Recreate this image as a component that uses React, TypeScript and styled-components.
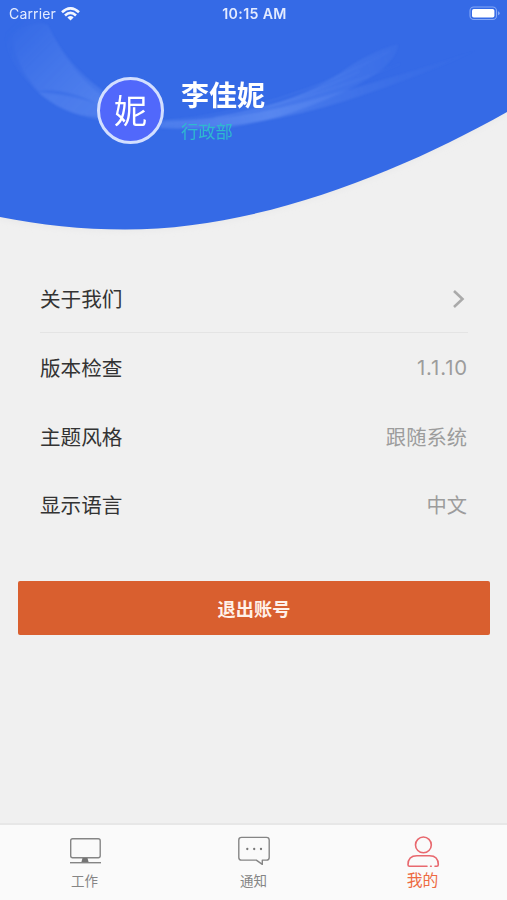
import React from "react";
import styled, { createGlobalStyle } from "styled-components";

const GlobalStyle = createGlobalStyle`
  * { box-sizing: border-box; }
  body {
    margin: 0;
    background: #f0f0f0;
    font-family: Inter, "Noto Sans CJK SC", sans-serif;
  }
`;

const Screen = styled.div`
  display: flex;
  flex-direction: column;
  width: 507px;
  height: 900px;
  background: #f0f0f0;
  overflow: hidden;
`;

const Header = styled.header`
  position: relative;
  height: 264px;
  flex: none;
  color: #fff;
`;

const Backdrop = styled.svg`
  position: absolute;
  inset: 0;
`;

const StatusBar = styled.div`
  position: relative;
  display: grid;
  grid-template-columns: 1fr auto 1fr;
  align-items: center;
  height: 27px;
  padding: 0 7px 0 9px;
  font-size: 14px;
  line-height: 20px;
  color: #e3ebff;
`;

const Carrier = styled.div`
  display: flex;
  align-items: center;
  gap: 5px;
  letter-spacing: 0.15px;
`;

const Clock = styled.div`
  font-weight: 600;
  font-size: 14.2px;
  letter-spacing: 0.35px;
`;

const BatterySlot = styled.div`
  display: flex;
  justify-content: flex-end;
`;

const Profile = styled.div`
  position: relative;
  display: flex;
  align-items: flex-start;
  gap: 17px;
  padding: 50px 0 0 97px;
`;

const Avatar = styled.div`
  display: flex;
  align-items: center;
  justify-content: center;
  width: 67px;
  height: 67px;
  border: 3px solid #d3dfff;
  border-radius: 50%;
  background: #5168fb;
  font-size: 33px;
  line-height: 48px;
  font-weight: 400;
`;

const Identity = styled.div`
  display: flex;
  flex-direction: column;
  padding-top: 1px;
`;

const Name = styled.div`
  font-size: 28px;
  line-height: 36px;
  font-weight: 600;
`;

const Department = styled.div`
  margin-top: 6px;
  font-size: 17.3px;
  line-height: 24px;
  color: #2fb9cf;
`;

const Settings = styled.main`
  display: flex;
  flex-direction: column;
  padding: 0 39px 0 40px;
`;

const SettingRow = styled.div<{ $divided?: boolean }>`
  display: flex;
  align-items: center;
  justify-content: space-between;
  height: ${(p) => (p.$divided ? 69 : 68.7)}px;
  padding-top: 2px;
  border-bottom: ${(p) => (p.$divided ? "1px solid #e4e4e4" : "none")};
`;

const SettingLabel = styled.span`
  padding-top: 1px;
  font-size: 20.6px;
  line-height: 30px;
  color: #333;
`;

const SettingValue = styled.span<{ $numeric?: boolean }>`
  padding-top: ${(p) => (p.$numeric ? 0 : 1)}px;
  margin-right: ${(p) => (p.$numeric ? 0 : 1)}px;
  font-size: 20.3px;
  line-height: 30px;
  letter-spacing: ${(p) => (p.$numeric ? "0.9px" : "0")};
  color: #9c9c9c;
`;

const LogoutButton = styled.button`
  flex: none;
  height: 54px;
  margin: 42px 17px 0 18px;
  padding: 0;
  border: 0;
  border-radius: 2px;
  background: #d95f2f;
  color: #fff1e9;
  font-family: inherit;
  font-size: 18.2px;
  font-weight: 600;
`;

const TabBar = styled.nav`
  display: grid;
  grid-template-columns: repeat(3, 1fr);
  height: 77px;
  flex: none;
  margin-top: auto;
  border-top: 2px solid #e7e7e7;
  background: #fafafa;
`;

const Tab = styled.div<{ $active?: boolean }>`
  display: flex;
  flex-direction: column;
  align-items: center;
  padding-top: 11px;
  color: ${(p) => (p.$active ? "#ed6b42" : "#858585")};
  font-size: ${(p) => (p.$active ? 15.8 : 13.5)}px;
`;

const TabLabel = styled.span<{ $active?: boolean }>`
  line-height: 22px;
`;

const HeaderBackdrop = () => (
  <Backdrop width="507" height="264" viewBox="0 0 507 264" aria-hidden>
    <defs>
      <linearGradient id="leftVeil" x1="10" y1="25" x2="100" y2="115" gradientUnits="userSpaceOnUse">
        <stop offset="0" stopColor="#8fb4ff" stopOpacity="0" />
        <stop offset="1" stopColor="#8fb4ff" stopOpacity="0.24" />
      </linearGradient>
      <linearGradient id="rightVeil" x1="150" y1="130" x2="485" y2="50" gradientUnits="userSpaceOnUse">
        <stop offset="0" stopColor="#8fb4ff" stopOpacity="0.12" />
        <stop offset="0.35" stopColor="#8fb4ff" stopOpacity="0.22" />
        <stop offset="0.75" stopColor="#8fb4ff" stopOpacity="0.06" />
        <stop offset="1" stopColor="#8fb4ff" stopOpacity="0" />
      </linearGradient>
      <filter id="soften" x="-10%" y="-10%" width="120%" height="120%">
        <feGaussianBlur stdDeviation="0.9" />
      </filter>
      <filter id="shade" x="-10%" y="-10%" width="120%" height="130%">
        <feGaussianBlur stdDeviation="3" />
      </filter>
    </defs>
    <path d="M0 0H507V113C400 173 260 231 125 231C82 231 40 227 0 219Z" fill="#e8e8e9" filter="url(#shade)" />
    <path d="M0 0H507V112C400 172 260 229.500 125 229.500C82 229.500 40 225 0 217Z" fill="#356ae6" />
    <g filter="url(#soften)">
      <path d="M5 20Q0 52 28 82Q52 112 100 120V94Q70 72 48 25Q25 10 5 20Z" fill="url(#leftVeil)" opacity="0.6" />
      <path d="M48 25Q66 64 102 90V106Q65 87 38 91Q15 65 12 35Q28 20 48 25Z" fill="url(#leftVeil)" opacity="0.9" />
      <path d="M38 92Q72 94 104 106V116Q70 120 38 92Z" fill="#8fb4ff" opacity="0.17" />
      <path d="M160 120Q210 121 253 110Q310 96 350 66Q375 50 398 44Q398 66 345 91Q275 124 215 129Q185 130 160 128Z" fill="url(#rightVeil)" />
      <path d="M160 122Q240 121 318 98Q405 75 485 47Q420 77 345 101Q250 131 160 128Z" fill="url(#rightVeil)" />
      <g fill="none" stroke="url(#rightVeil)" strokeWidth="1">
        <path d="M165 121Q280 111 390 51" />
        <path d="M165 124Q285 111 400 64" />
        <path d="M215 118Q300 101 360 71" />
      </g>
    </g>
  </Backdrop>
);

const WifiIcon = () => (
  <svg width="19" height="14" viewBox="0 0 19 14" aria-hidden>
    <g fill="none" stroke="#f2f6ff" strokeWidth="2.600">
      <path d="M1 5.200Q9.500 -2.500 18 5.200" />
      <path d="M4 8.500Q9.500 3.300 15 8.500" />
    </g>
    <path d="M6.400 10.400Q9.500 7.700 12.600 10.400L9.500 13.500Z" fill="#f2f6ff" />
  </svg>
);

const BatteryIcon = () => (
  <svg width="31" height="15" viewBox="0 0 31 15" aria-hidden>
    <rect x="1" y="1" width="26.500" height="12.500" rx="3.800" fill="none" stroke="#86a8f6" strokeWidth="1.100" />
    <rect x="3" y="2.900" width="22.400" height="8.700" rx="1.800" fill="#fff" />
    <path d="M29 5.300Q30.700 6 30.700 7.300T29 9.300Z" fill="#86a8f6" />
  </svg>
);

const ChevronIcon = () => (
  <svg width="16" height="20" viewBox="0 0 16 20" aria-hidden>
    <path d="M2 2L10.500 10L2 18" fill="none" stroke="#aaa" strokeWidth="2.600" />
  </svg>
);

const MonitorIcon = () => (
  <svg width="34" height="34" viewBox="0 0 34 34" aria-hidden>
    <rect x="2.700" y="2.700" width="29.500" height="19" rx="2" fill="none" stroke="#858585" strokeWidth="1.400" />
    <path d="M14.500 22h5l1.200 4.500h-7.400z" fill="#747474" />
    <path d="M2 26.700h31" stroke="#858585" strokeWidth="1.400" />
  </svg>
);

const MessageIcon = () => (
  <svg width="34" height="34" viewBox="0 0 34 34" aria-hidden>
    <path
      d="M4.500 1.400h25q2.700 0 2.700 2.700v17.300q0 2.700-2.700 2.700h-4.200v4.300l-6-4.300H4.500q-2.700 0-2.700-2.700V4.100q0-2.700 2.700-2.700Z"
      fill="none"
      stroke="#858585"
      strokeWidth="1.400"
      strokeLinejoin="round"
    />
    <g fill="#777">
      <circle cx="10.300" cy="13" r="1.150" />
      <circle cx="17.200" cy="13" r="1.150" />
      <circle cx="24" cy="13" r="1.150" />
    </g>
  </svg>
);

const PersonIcon = () => (
  <svg width="34" height="34" viewBox="0 0 34 34" aria-hidden>
    <g fill="none" stroke="#e8686e" strokeWidth="1.600" strokeLinecap="round">
      <circle cx="17.400" cy="8.900" r="7.900" />
      <path d="M21 30.300H3.500Q2 30.300 2 28.800Q2 19.800 11 19.800H23.500Q32.300 19.800 32.300 28.800Q32.300 30.300 30.800 30.300H29" />
      <path d="M24.600 30.300h.6" />
    </g>
  </svg>
);

const settings = [
  { label: "版本检查", value: "1.1.10", numeric: true },
  { label: "主题风格", value: "跟随系统" },
  { label: "显示语言", value: "中文" },
];

const tabs = [
  { label: "工作", Icon: MonitorIcon },
  { label: "通知", Icon: MessageIcon },
  { label: "我的", Icon: PersonIcon, active: true },
];

export default function App() {
  return (
    <Screen>
      <GlobalStyle />
      <Header>
        <HeaderBackdrop />
        <StatusBar>
          <Carrier>
            Carrier
            <WifiIcon />
          </Carrier>
          <Clock>10:15 AM</Clock>
          <BatterySlot>
            <BatteryIcon />
          </BatterySlot>
        </StatusBar>
        <Profile>
          <Avatar>妮</Avatar>
          <Identity>
            <Name>李佳妮</Name>
            <Department>行政部</Department>
          </Identity>
        </Profile>
      </Header>
      <Settings>
        <SettingRow $divided>
          <SettingLabel>关于我们</SettingLabel>
          <ChevronIcon />
        </SettingRow>
        {settings.map((item) => (
          <SettingRow key={item.label}>
            <SettingLabel>{item.label}</SettingLabel>
            <SettingValue $numeric={item.numeric}>{item.value}</SettingValue>
          </SettingRow>
        ))}
      </Settings>
      <LogoutButton>退出账号</LogoutButton>
      <TabBar>
        {tabs.map(({ label, Icon, active }) => (
          <Tab key={label} $active={active}>
            <Icon />
            <TabLabel>{label}</TabLabel>
          </Tab>
        ))}
      </TabBar>
    </Screen>
  );
}
